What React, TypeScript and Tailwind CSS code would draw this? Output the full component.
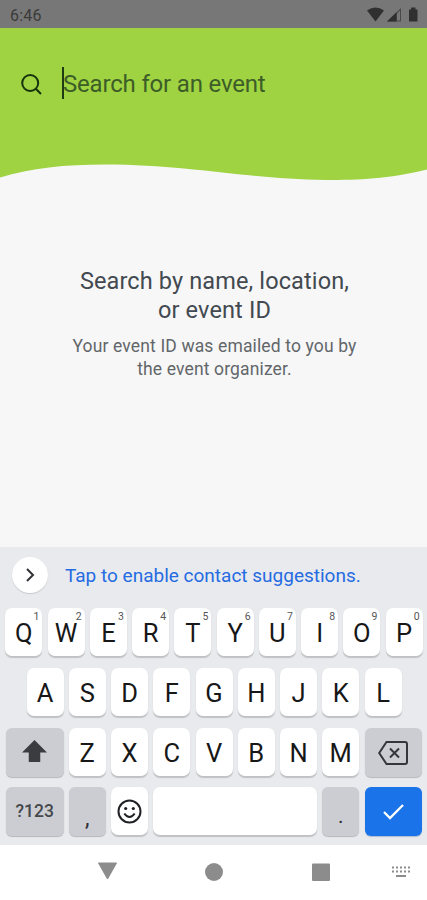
import type { ReactNode } from "react";

const topRow = ["Q", "W", "E", "R", "T", "Y", "U", "I", "O", "P"];
const middleRow = ["A", "S", "D", "F", "G", "H", "J", "K", "L"];
const bottomRow = ["Z", "X", "C", "V", "B", "N", "M"];

function LetterKey({ letter, hint }: { letter: string; hint?: number }) {
  return (
    <div className="relative flex h-12 w-[37px] shrink-0 items-center justify-center rounded-[7px] bg-white pt-[2px] text-[25.5px] leading-[18px] text-[#171717] shadow-[0_1.5px_1px_#bfc1c5]">
      {letter}
      {hint !== undefined && (
        <span className="absolute right-[3px] top-[4px] text-[10.5px] leading-[10px] text-[#555]">{hint}</span>
      )}
    </div>
  );
}

function GreyKey({ children, wide }: { children: ReactNode; wide?: boolean }) {
  return (
    <div
      className={`${wide ? "w-[57.5px]" : "w-[37px]"} flex h-[49px] shrink-0 items-center justify-center rounded-[6px] bg-[#cccdd2] text-[#2e3135] shadow-[0_1px_1px_#b5b7bb]`}
    >
      {children}
    </div>
  );
}

function StatusBar() {
  return (
    <div className="flex h-7 items-center justify-between bg-[#777] pl-[10px] pr-[8px] text-[#3b3b3b]">
      <span className="pt-[3px] text-[16px] leading-none tracking-[0.2px]">6:46</span>
      <svg width="52" height="16" viewBox="0 0 52 16" className="mt-px" fill="#303030">
        <path d="M0 3.5Q8.5-2.5 17 3.5L8.5 14.5Z" />
        <path d="M20 14.5L34 1V14.5Z" fill="#484848" />
        <path d="M20 14.5L29.5 5.3V14.5Z" />
        <path d="M30 6.5L33 3.5V13.5H30Z" fill="#777" />
        <path d="M42 2.5H44V0.5H48.5V2.5H50.5V14.5H42Z" />
      </svg>
    </div>
  );
}

export default function App() {
  return (
    <div className="flex h-[900px] w-[427px] flex-col overflow-hidden bg-[#f7f7f7] font-[Roboto,'Liberation_Sans',sans-serif]">
      <StatusBar />
      <header className="flex h-[112px] items-center bg-[#9fd341] pl-[20px]">
        <svg width="23" height="23" viewBox="0 0 23 23" fill="none" stroke="#16320d" strokeWidth="2">
          <circle cx="10.2" cy="10" r="8" />
          <path d="M15.8 15.7L21 21" />
        </svg>
        <div className="ml-[19px] h-8 w-[2px] -translate-y-px bg-[#1e3b14]" />
        <span className="-ml-[1px] whitespace-nowrap text-[24px] leading-8 tracking-[-0.18px] text-[#3d5d28]">Search for an event</span>
      </header>
      <svg width="427" height="42" viewBox="0 140 427 42" className="shrink-0">
        <path d="M0 140H427V169.5C387 179 360 180 326 180C245 179 190 164.5 105 164.5C65 164.5 31 168 0 177.5Z" fill="#9fd341" />
      </svg>

      <main className="flex h-[365px] shrink-0 flex-col items-center pl-[2px] pt-[85px] text-center">
        <h1 className="text-[23.5px] leading-[29px] tracking-[0.13px] text-[#424950]">
          Search by name, location,
          <br />
          or event ID
        </h1>
        <p className="mt-[10px] text-[17.5px] leading-[23px] tracking-[0.14px] text-[#62666a]">
          Your event ID was emailed to you by
          <br />
          the event organizer.
        </p>
      </main>

      <section className="h-[298px] shrink-0 bg-[#e8eaed]">
        <div className="flex h-[61px] items-center pb-[5px] pl-[12px]">
          <div className="flex size-9 items-center justify-center rounded-full bg-white shadow-[0_1px_1px_#c7c9cc]">
            <svg width="10" height="14" viewBox="0 0 10 14" fill="none" stroke="#303236" strokeWidth="2">
              <path d="M2 1L8 7L2 13" />
            </svg>
          </div>
          <span className="ml-[17px] whitespace-nowrap pt-[2px] text-[19px] leading-6 text-[#256be2]">
            Tap to enable contact suggestions.
          </span>
        </div>
        <div className="flex flex-col gap-3 pl-px">
          <div className="flex justify-center gap-[5.25px]">
            {topRow.map((letter, i) => <LetterKey key={letter} letter={letter} hint={(i + 1) % 10} />)}
          </div>
          <div className="flex justify-center gap-[5.25px]">
            {middleRow.map((letter) => <LetterKey key={letter} letter={letter} />)}
          </div>
          <div className="flex h-12 justify-center gap-[5.25px]">
            <GreyKey wide>
              <svg width="25" height="23" viewBox="0 0 26 24" fill="#3a3c40" className="-translate-y-px">
                <path d="M13 0L26 13H19V23H7V13H0Z" />
              </svg>
            </GreyKey>
            {bottomRow.map((letter) => <LetterKey key={letter} letter={letter} />)}
            <GreyKey wide>
              <svg width="30" height="24" viewBox="0 0 30 24" fill="none" stroke="#34363a" strokeWidth="2">
                <path d="M8.5 1H27Q29 1 29 3V21Q29 23 27 23H8.5L1.2 12Z" />
                <path d="M12 7.5L21 16.5M21 7.5L12 16.5" />
              </svg>
            </GreyKey>
          </div>
          <div className="-mt-px flex justify-center gap-[5.25px]">
            <GreyKey wide>
              <span className="pt-px text-[17.5px] font-medium leading-none tracking-[0.1px] text-[#45484c]">?123</span>
            </GreyKey>
            <GreyKey><span className="pt-[13px] text-[23px] leading-none">,</span></GreyKey>
            <div className="flex h-12 w-[37px] shrink-0 items-center justify-center rounded-[7px] bg-white shadow-[0_1.5px_1px_#bfc1c5]">
              <svg width="25" height="25" viewBox="0 0 25 25" fill="none" stroke="#202124" strokeWidth="2">
                <circle cx="12.5" cy="12.5" r="11" />
                <circle cx="8.7" cy="9.5" r="1.6" fill="#202124" stroke="none" />
                <circle cx="16.3" cy="9.5" r="1.6" fill="#202124" stroke="none" />
                <path d="M7.3 14.5Q12.5 21.5 17.7 14.5" />
              </svg>
            </div>
            <div className="h-12 w-[163.75px] shrink-0 rounded-[7px] bg-white shadow-[0_1.5px_1px_#bfc1c5]" />
            <GreyKey><span className="pt-[9px] text-[21px] leading-none">.</span></GreyKey>
            <div className="flex h-[49px] w-[57.5px] shrink-0 items-center justify-center rounded-[6px] bg-[#1a73e8] shadow-[0_1px_1px_#aebdd2]">
              <svg width="21" height="16" viewBox="0 0 21 16" fill="none" stroke="white" strokeWidth="2.3">
                <path d="M1 8L7 14L20 1" />
              </svg>
            </div>
          </div>
        </div>
      </section>

      <nav className="min-h-0 flex-1 bg-white">
        <svg width="427" height="55" viewBox="0 845 427 55" fill="#8c8c8c">
          <path d="M98.5 863H116.5L107.5 879Z" stroke="#8c8c8c" strokeWidth="1" strokeLinejoin="round" />
          <circle cx="214" cy="872" r="9" />
          <rect x="312" y="863.5" width="18" height="17.5" rx="1" />
          {[392, 396, 400, 404, 408].map((x) => (
            <g key={x}>
              <rect x={x} y="866.5" width="2" height="2" />
              <rect x={x} y="870.5" width="2" height="2" />
            </g>
          ))}
          <rect x="396" y="875" width="10" height="2" />
        </svg>
      </nav>
    </div>
  );
}
